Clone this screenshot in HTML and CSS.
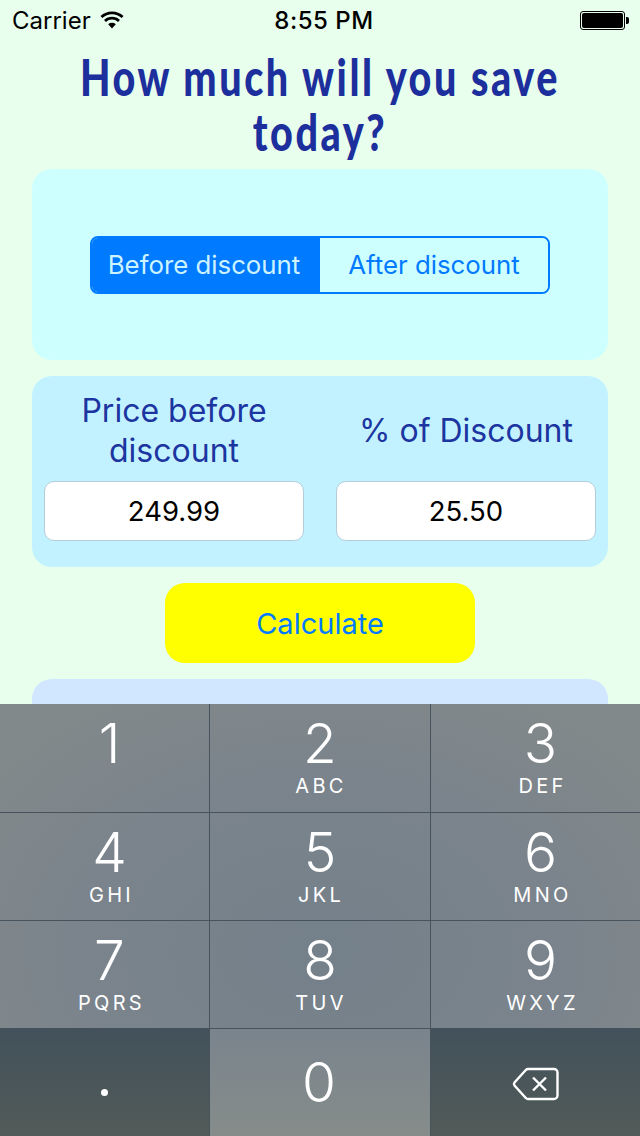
FILE: index.html
```html
<!DOCTYPE html>
<html lang="en">
<head>
<meta charset="utf-8">
<title>How much will you save today?</title>
<link rel="stylesheet" href="styles.css">
</head>
<body>
<div class="screen">
  <div class="content">
    <header class="status">
      <div class="status-left"><span>Carrier</span>
        <svg class="wifi" width="26" height="20" viewBox="0 0 26 20"><path d="M13 18.500 9.200 14.300a5.600 5.600 0 0 1 7.600 0Z" fill="#000"/><path d="M6 10.900a10.200 10.200 0 0 1 14 0M2.400 7a15.500 15.500 0 0 1 21.200 0" fill="none" stroke="#000" stroke-width="2.800"/></svg>
      </div>
      <div class="status-time">8:55 PM</div>
      <div class="status-right">
        <div class="battery"><div class="battery-fill"></div></div><div class="battery-cap"></div>
      </div>
    </header>
    <h1 class="title">How much will you save today?</h1>
    <section class="card card-mode">
      <div class="segmented">
        <div class="seg seg-on">Before discount</div>
        <div class="seg">After discount</div>
      </div>
    </section>
    <section class="card card-inputs">
      <div class="field">
        <div class="label">Price before discount</div>
        <div class="input">249.99</div>
      </div>
      <div class="field">
        <div class="label">% of Discount</div>
        <div class="input">25.50</div>
      </div>
    </section>
    <div class="calc-row"><div class="calc">Calculate</div></div>
    <section class="card card-result"></section>
  </div>
  <div class="keyboard">
    <div class="key key-side"><span class="digit">1</span></div>
    <div class="key"><span class="digit">2</span><span class="letters">ABC</span></div>
    <div class="key key-side"><span class="digit">3</span><span class="letters">DEF</span></div>
    <div class="key key-side"><span class="digit">4</span><span class="letters">GHI</span></div>
    <div class="key"><span class="digit">5</span><span class="letters">JKL</span></div>
    <div class="key key-side"><span class="digit">6</span><span class="letters">MNO</span></div>
    <div class="key key-side"><span class="digit">7</span><span class="letters">PQRS</span></div>
    <div class="key"><span class="digit">8</span><span class="letters">TUV</span></div>
    <div class="key key-side"><span class="digit">9</span><span class="letters">WXYZ</span></div>
    <div class="key key-dark key-dot"><span class="dot"></span></div>
    <div class="key key-zero"><span class="digit">0</span></div>
    <div class="key key-dark key-back">
      <svg width="50" height="36" viewBox="0 0 50 36"><path d="M17 3H43a3.500 3.500 0 0 1 3.500 3.500V29.500A3.500 3.500 0 0 1 43 33H17a3 3 0 0 1-2.200-1L3.500 19.500a2.500 2.500 0 0 1 0-3L14.800 4a3 3 0 0 1 2.200-1Z" fill="none" stroke="#fff" stroke-width="2.400"/><path d="M22 11.500 35 24.500M35 11.500 22 24.500" fill="none" stroke="#fff" stroke-width="2.400"/></svg>
    </div>
  </div>
</div>
</body>
</html>
```
FILE: styles.css
```css
* { box-sizing: border-box; }
html, body { margin: 0; padding: 0; }
body { font-family: "Inter", "Liberation Sans", sans-serif; background: #e8ffee; }
.screen { width: 640px; height: 1136px; overflow: hidden; display: flex; flex-direction: column; }
.content { height: 704px; overflow: hidden; background: #e8ffee; }
.status { height: 40px; display: grid; grid-template-columns: 1fr auto 1fr; align-items: center; padding: 0 11px 0 12px; font-size: 24px; color: #000; }
.status-left { display: flex; align-items: center; gap: 8px; }
.status-time { font-weight: 500; letter-spacing: .5px; padding-left: 7px; }
.status-right { display: flex; justify-content: flex-end; align-items: center; }
.battery { width: 45px; height: 19px; border: 1px solid #000; border-radius: 3px; padding: 1px; }
.battery-fill { width: 100%; height: 100%; background: #000; border-radius: 2px; }
.battery-cap { width: 3px; height: 7px; margin-left: 1px; background: #000; border-radius: 0 2px 2px 0; }
.title { margin: 0 auto; width: 640px; height: 129px; padding-top: 9px; text-align: center; font-family: "Lato", "Liberation Sans", sans-serif; font-weight: 900; font-size: 52px; line-height: 55px; letter-spacing: 3.4px; color: #1c2f9c; transform: scaleX(.76); }
.card { margin: 0 32px 16px; border-radius: 20px; }
.card-mode { height: 191px; background: #ceffff; display: flex; align-items: center; justify-content: center; }
.segmented { width: 460px; height: 58px; display: flex; border: 2px solid #007aff; border-radius: 8px; overflow: hidden; font-size: 25.8px; color: #007aff; }
.seg { width: 228px; flex: 1 1 auto; display: flex; align-items: center; justify-content: center; background: #ceffff; }
.seg-on { flex: none; background: #007aff; color: #cdf3ff; padding-right: 4px; }
.card-inputs { height: 191px; background: #c2f2ff; padding: 15px 12px 26px; display: grid; grid-template-columns: 260px 260px; justify-content: space-between; }
.field { display: flex; flex-direction: column; gap: 10px; }
.label { height: 80px; padding: 0 15px; display: flex; align-items: center; justify-content: center; text-align: center; font-size: 32px; line-height: 40px; color: #1c35a0; }
.input { height: 60px; padding-bottom: 1px; background: #fff; border: 1px solid #b4cdd8; border-radius: 10px; display: flex; align-items: center; justify-content: center; font-size: 27.500px; color: #000; }
.calc-row { display: flex; justify-content: center; margin-bottom: 16px; }
.calc { width: 310px; height: 80px; background: #ff0; border-radius: 20px; display: flex; align-items: center; justify-content: center; font-size: 29px; color: #007aff; }
.card-result { height: 200px; background: #d0e7ff; }
.keyboard { height: 432px; display: grid; grid-template-columns: 209px 220px 209px; grid-template-rows: 108px 107px 107px 107px; gap: 1px; background: #46525c; }
.key { display: flex; flex-direction: column; align-items: center; color: #fff; background: radial-gradient(ellipse 420px 300px at 320px 950px, #74808a 0%, #7b848c 60%, #82898a 100%) fixed; }
.key-side { padding-left: 12px; }
.digit { font-size: 55px; font-weight: 300; line-height: 66px; margin-top: 6px; }
.key-side .digit { margin-right: 2px; }
.letters { font-size: 20px; line-height: 24px; letter-spacing: 3.300px; margin-top: -2px; margin-left: 2px; }
.key-dark { background: linear-gradient(#42515b, #525b58); margin-top: -1px; }
.key-zero { background: linear-gradient(#7a848d, #858c8a); }
.key-zero .digit { margin-top: 20px; margin-right: 2px; }
.key-dot { padding-top: 61px; padding-left: 0; }
.dot { width: 7px; height: 7px; border-radius: 50%; background: #fff; }
.key-back { padding-top: 38px; }
```
